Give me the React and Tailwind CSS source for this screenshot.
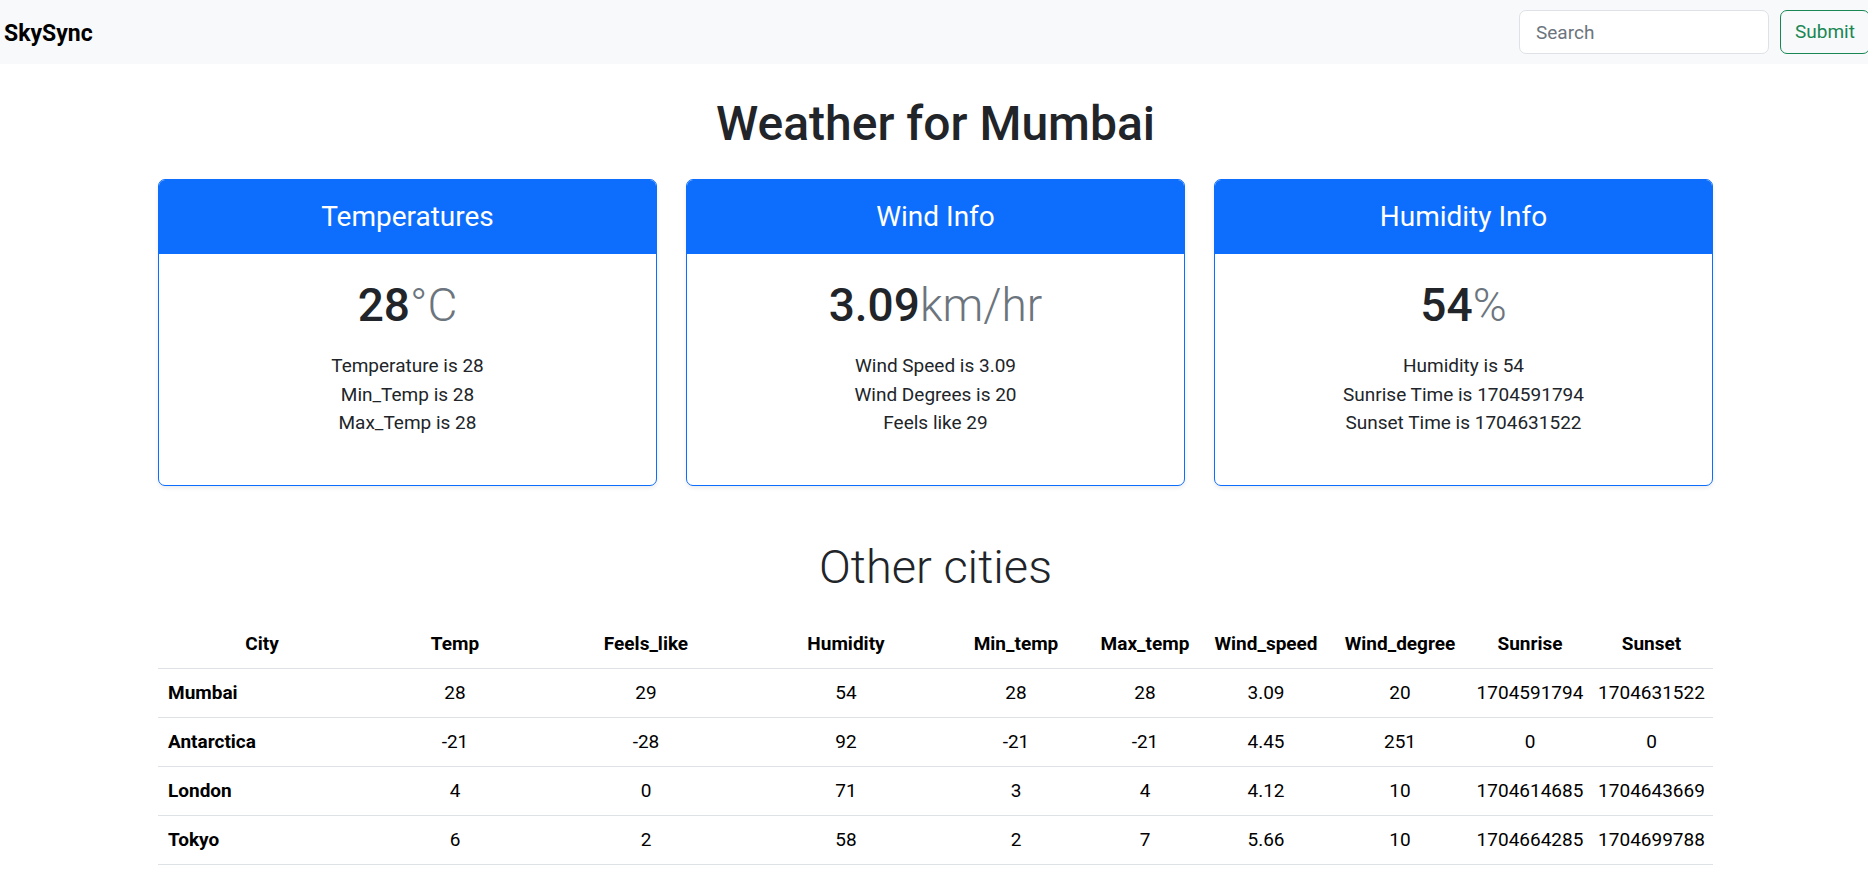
import React from 'react';

const cards = [
  {
    title: 'Temperatures',
    value: '28',
    unit: '°C',
    lines: ['Temperature is 28', 'Min_Temp is 28', 'Max_Temp is 28'],
  },
  {
    title: 'Wind Info',
    value: '3.09',
    unit: 'km/hr',
    lines: ['Wind Speed is 3.09', 'Wind Degrees is 20', 'Feels like 29'],
  },
  {
    title: 'Humidity Info',
    value: '54',
    unit: '%',
    lines: ['Humidity is 54', 'Sunrise Time is 1704591794', 'Sunset Time is 1704631522'],
  },
];

const columns = [
  { name: 'City', w: 'w-[208px]' },
  { name: 'Temp', w: 'w-[178px]' },
  { name: 'Feels_like', w: 'w-[204px]' },
  { name: 'Humidity', w: 'w-[196px]' },
  { name: 'Min_temp', w: 'w-[144px]' },
  { name: 'Max_temp', w: 'w-[114px]' },
  { name: 'Wind_speed', w: 'w-[128px]' },
  { name: 'Wind_degree', w: 'w-[140px]' },
  { name: 'Sunrise', w: 'w-[120px]' },
  { name: 'Sunset', w: 'w-[123px]' },
];

const rows = [
  ['Mumbai', '28', '29', '54', '28', '28', '3.09', '20', '1704591794', '1704631522'],
  ['Antarctica', '-21', '-28', '92', '-21', '-21', '4.45', '251', '0', '0'],
  ['London', '4', '0', '71', '3', '4', '4.12', '10', '1704614685', '1704643669'],
  ['Tokyo', '6', '2', '58', '2', '7', '5.66', '10', '1704664285', '1704699788'],
];

const Card = ({ title, value, unit, lines }) => (
  <div className="border border-[#0d6efd] rounded-[7px] overflow-hidden shadow-[0_2px_4px_rgba(0,0,0,0.08)] bg-white">
    <div className="bg-[#0d6efd] text-white text-center text-[28px] leading-[34px] py-5">
      {title}
    </div>
    <div className="text-center pt-6 pb-[47px]">
      <h1 className="text-[46px] leading-[55px] font-medium">
        {value}
        <span className="font-light text-[#6c757d]">{unit}</span>
      </h1>
      <div className="mt-[19px] text-[19px] leading-[28.5px]">
        {lines.map((l) => (
          <div key={l}>{l}</div>
        ))}
      </div>
    </div>
  </div>
);

export default function App() {
  return (
    <div className="min-h-screen bg-white text-[#212529] font-[Roboto,'Liberation_Sans',sans-serif] overflow-hidden">
      {/* navbar */}
      <nav className="h-[64px] bg-[#f8f9fa] flex items-center justify-between pl-1">
        <a href="#" className="pt-1 text-[23px] font-bold text-black">
          SkySync
        </a>
        <form className="flex items-center gap-[11px] -mr-[2px]" onSubmit={(e) => e.preventDefault()}>
          <input
            placeholder="Search"
            className="w-[250px] h-[44px] px-4 text-[19px] bg-white border border-[#dee2e6] rounded-[7px] placeholder:text-[#6c757d] outline-none"
          />
          <button className="h-[44px] w-[90px] text-[19px] text-[#198754] border border-[#198754] rounded-[7px]">
            Submit
          </button>
        </form>
      </nav>

      <main className="w-[1555px] ml-[158px]">
        <h1 className="mt-[32px] text-center text-[48px] leading-[55px] font-medium">
          Weather for Mumbai
        </h1>

        <div className="mt-[28px] grid grid-cols-3 gap-[29px]">
          {cards.map((c) => (
            <Card key={c.title} {...c} />
          ))}
        </div>

        <h2 className="mt-[53px] text-center text-[47px] leading-[56px] font-light">Other cities</h2>

        <table className="mt-[25px] w-full table-fixed border-collapse text-[19px]">
          <colgroup>
            {columns.map((c) => (
              <col key={c.name} className={c.w} />
            ))}
          </colgroup>
          <thead>
            <tr className="border-b border-[#dee2e6]">
              {columns.map((c) => (
                <th key={c.name} className="py-[10px] leading-[28px] font-bold text-center text-black">
                  {c.name}
                </th>
              ))}
            </tr>
          </thead>
          <tbody>
            {rows.map((r) => (
              <tr key={r[0]} className="border-b border-[#dee2e6]">
                {r.map((v, i) =>
                  i === 0 ? (
                    <th key={i} className="py-[10px] px-[10px] leading-[28px] font-bold text-left text-black">
                      {v}
                    </th>
                  ) : (
                    <td key={i} className="py-[10px] leading-[28px] text-center text-black">
                      {v}
                    </td>
                  )
                )}
              </tr>
            ))}
          </tbody>
        </table>
      </main>
    </div>
  );
}
